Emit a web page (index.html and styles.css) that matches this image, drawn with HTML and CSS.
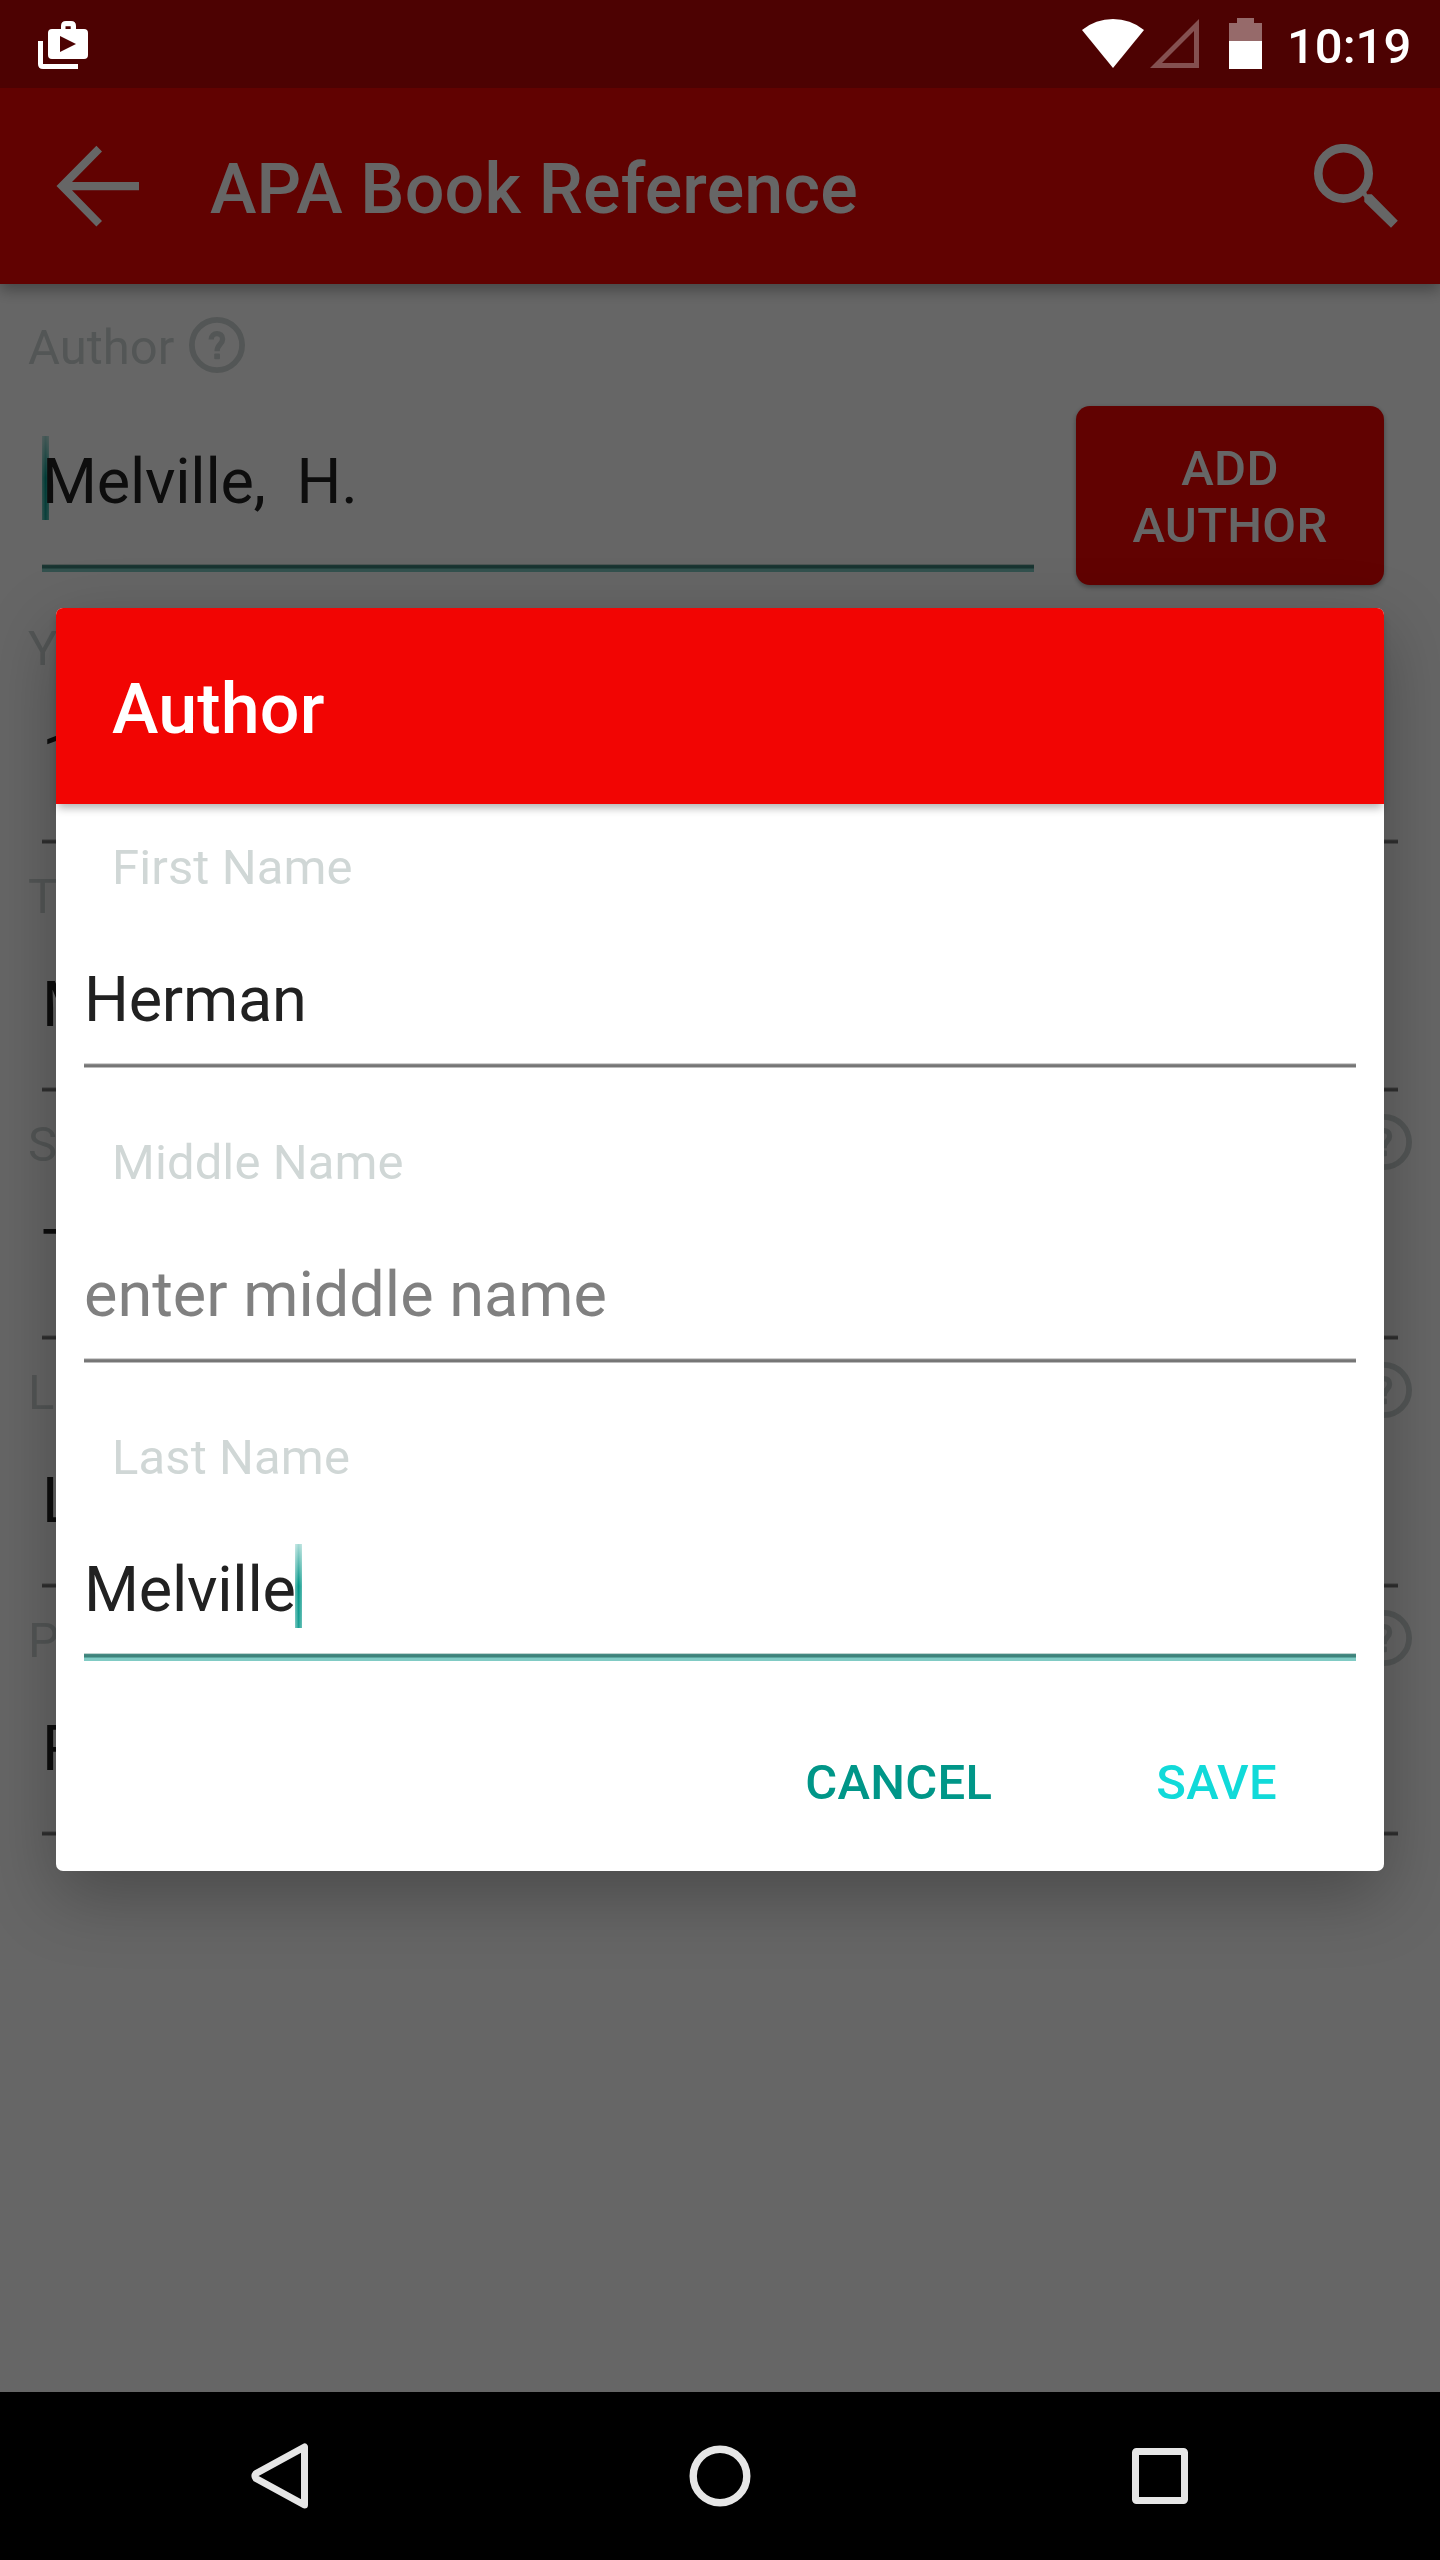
FILE: index.html
```html
<!DOCTYPE html>
<html lang="en">
<head>
<meta charset="utf-8">
<title>APA Book Reference</title>
<link rel="stylesheet" href="styles.css">
</head>
<body>
<svg width="0" height="0" class="defs">
  <symbol id="help" viewBox="0 0 56 56">
    <circle cx="28" cy="28" r="25.1" fill="none" stroke="currentColor" stroke-width="5.8"/>
    <path d="M22.2 22.6C22.2 14.7 33.6 14.9 33.6 21.9C33.6 27.3 28.1 27.4 28.1 34.2" fill="none" stroke="currentColor" stroke-width="5.4"/>
    <rect x="25.2" y="36.6" width="5.8" height="5.6" rx="1" fill="currentColor"/>
  </symbol>
</svg>
<div class="screen">
  <header class="status-bar">
    <svg class="notif" width="50" height="48" viewBox="38 21 50 48" fill="#fff">
      <path fill-rule="evenodd" d="M61 29V26Q61 21 66 21H71Q76 21 76 26V29H84Q88 29 88 33V55Q88 59 84 59H52Q48 59 48 55V33Q48 29 52 29ZM65.5 29H70.7V26.2H65.5ZM60 36V52L76 44Z"/>
      <path d="M38 41H43V64H78V69H43Q38 69 38 64Z"/>
    </svg>
    <div class="indicators">
      <svg width="62" height="49" viewBox="1082 19 62 49"><path fill="#fff" d="M1082 30A49.2 49.2 0 0 1 1144 30L1113 68Z"/></svg>
      <svg class="signal" width="49" height="49" viewBox="1150 19 49 49"><path fill="#fff" fill-opacity=".31" fill-rule="evenodd" d="M1199 19V68H1150ZM1194 31V63H1162Z"/></svg>
      <svg class="battery" width="33" height="51" viewBox="0 0 33 51"><path fill="#fff" fill-opacity=".41" d="M8 0H25V5H33V23H0V5H8Z"/><path fill="#fff" d="M0 23H33V51H0Z"/></svg>
      <span class="clock">10:19</span>
    </div>
  </header>
  <div class="toolbar">
    <svg class="back" width="84" height="84" viewBox="57 144 84 84"><path fill="#fff" d="M57.5 186L97.4 145.8L103 151.4L73 182H140V190.2H73L103 221L97.4 226.6Z"/></svg>
    <h1 class="title">APA Book Reference</h1>
    <svg class="search" width="84" height="84" viewBox="1314 144 84 84"><circle cx="1343.5" cy="173.4" r="25.2" fill="none" stroke="#fff" stroke-width="8.6"/><path fill="#fff" d="M1361 193L1365.5 189.5L1367 194.3H1371.7L1397.8 220.7L1391 227.8L1364.3 201.7V197.5Z"/></svg>
  </div>
  <main class="form">
    <div class="label-row">Author <svg class="help"><use href="#help"/></svg></div>
    <div class="author-row">
      <div class="author-field">
        <div class="value"><span class="caret start"></span>Melville,&nbsp; H.</div>
        <div class="line focus"></div>
      </div>
      <button class="add">ADD<br>AUTHOR</button>
    </div>
    <div class="row"><div class="label-row split">Y</div><div class="value">1</div><div class="line"></div></div>
    <div class="row"><div class="label-row split">T</div><div class="value">M</div><div class="line"></div></div>
    <div class="row"><div class="label-row split">S <svg class="help"><use href="#help"/></svg></div><div class="value">T</div><div class="line"></div></div>
    <div class="row"><div class="label-row split">L <svg class="help"><use href="#help"/></svg></div><div class="value">L</div><div class="line"></div></div>
    <div class="row"><div class="label-row split">P <svg class="help"><use href="#help"/></svg></div><div class="value">R</div><div class="line"></div></div>
  </main>
  <nav class="nav-bar">
    <svg width="240" height="168" viewBox="160 0 240 168"><path fill="none" stroke="#e6e6e6" stroke-width="7" stroke-linejoin="round" d="M304.500 55V113L256 86.5Q254 84 256 81.500Z"/></svg>
    <svg width="240" height="168" viewBox="600 0 240 168"><circle cx="720" cy="84" r="26.800" fill="none" stroke="#e6e6e6" stroke-width="7.400"/></svg>
    <svg width="240" height="168" viewBox="1040 0 240 168"><rect x="1135.500" y="59.500" width="49" height="49" rx="1" fill="none" stroke="#e6e6e6" stroke-width="7"/></svg>
  </nav>
  <div class="scrim">
    <section class="dialog">
      <h2 class="title dialog-title">Author</h2>
      <div class="dialog-body">
        <div class="field"><div class="field-label">First Name</div><div class="value">Herman</div><div class="line"></div></div>
        <div class="field"><div class="field-label">Middle Name</div><div class="value hint">enter middle name</div><div class="line"></div></div>
        <div class="field"><div class="field-label">Last Name</div><div class="value">Melville<span class="caret"></span></div><div class="line focus"></div></div>
        <div class="actions"><button class="cancel">CANCEL</button><button class="save">SAVE</button></div>
      </div>
    </section>
  </div>
</div>
</body>
</html>
```
FILE: styles.css
```css
* { box-sizing: border-box; }
body { margin: 0; font-family: Roboto, "Noto Sans", sans-serif; background: #000; }
.defs { position: absolute; }
svg { display: block; flex: none; }
button { border: 0; margin: 0; padding: 0; font: 500 49px/57px Roboto, sans-serif; letter-spacing: .3px; background: none; }
.screen { position: relative; width: 1440px; height: 2560px; display: flex; flex-direction: column; background: #fff; overflow: hidden; }

.status-bar { height: 88px; display: flex; justify-content: space-between; align-items: flex-start; padding: 0 26px 0 38px; background: #4d0202; position: relative; z-index: 3; }
.notif { margin-top: 21px; }
.indicators { display: flex; align-items: flex-start; padding-top: 19px; }
.signal { margin-left: 6px; }
.battery { margin: -1px 25px 0 30px; }
.clock { color: #fff; font-weight: 500; font-size: 49px; line-height: 55px; width: 127px; white-space: nowrap; }

.toolbar { height: 196px; flex: none; display: flex; align-items: flex-start; padding: 0 42px 0 56px; background: #f20503; box-shadow: 0 6px 14px rgba(0,0,0,.32); position: relative; z-index: 1; }
.back, .search { margin-top: 56px; }
.title { margin: 0; padding-top: 6px; font-size: 70px; line-height: 190px; font-weight: 500; letter-spacing: .17px; color: #fff; white-space: nowrap; }
.toolbar .title { flex: 1; padding-left: 70px; }

.form { flex: 1; padding-top: 33px; }
.label-row { display: flex; height: 60px; padding: 0 28px; gap: 15px; font-size: 49px; line-height: 62px; color: #d0d7d6; }
.split { justify-content: space-between; }
.help { width: 56px; height: 56px; }
.value { font-size: 63px; line-height: 75px; height: 75px; letter-spacing: -.25px; color: #212121; white-space: nowrap; position: relative; }
.hint { color: #808080; letter-spacing: 0; }
.line { height: 5px; background: linear-gradient(#d0d0d0 0 1px, #888 1px 2px, #767676 2px 4px, #bcbcbc 4px); }
.line.focus { height: 8px; background: linear-gradient(#c0d4d0 0 1px, #468a83 1px 2px, #3f837b 2px 4px, #5aa79f 4px 5px, #80cbc4 5px); }
.caret { display: inline-block; width: 7px; height: 84px; margin-left: -1px; vertical-align: top; position: relative; top: -8px; background: linear-gradient(rgba(255,255,255,.65), rgba(255,255,255,0) 50%, rgba(255,255,255,.12)), linear-gradient(90deg, #6cc2ba, #009688 50%, #55b8ae); }
.caret.start { position: absolute; left: 0; top: -8px; margin: 0; z-index: -1; }

.author-row { display: flex; height: 241px; padding: 0 56px 0 42px; gap: 42px; position: relative; z-index: 0; }
.author-field { flex: 1; padding-top: 67px; }
.author-field .line { margin-top: 45px; }
.add { width: 308px; height: 179px; margin-top: 29px; padding-top: 2px; border-radius: 14px; background: #f20503; color: #fff; box-shadow: 0 2px 5px rgba(0,0,0,.35); }
.row { height: 248px; }
.row .value { margin: 41px 42px 0; }
.row .line { margin: 45px 42px 0; }

.nav-bar { height: 168px; flex: none; background: #000; display: flex; justify-content: space-between; padding: 0 160px; }

.scrim { position: absolute; inset: 0 0 168px; z-index: 2; background: rgba(0,0,0,.6); padding: 608px 56px 0; }
.dialog { height: 1263px; border-radius: 7px; background: #fff; box-shadow: 0 24px 70px rgba(0,0,0,.28); }
.dialog-title { height: 196px; padding-left: 56px; border-radius: 7px 7px 0 0; background: #f20503; box-shadow: 0 6px 9px -2px rgba(0,0,0,.3); }
.dialog-body { padding: 33px 28px 0; }
.field { height: 295px; }
.field-label { height: 60px; padding-left: 28px; font-size: 49px; line-height: 62px; letter-spacing: .1px; color: #d0d7d6; }
.field .value { margin-top: 65px; }
.field .line { margin-top: 26px; }
.actions { display: flex; justify-content: flex-end; gap: 164px; padding: 18px 79px 0 0; }
.actions button { line-height: 86px; height: 86px; }
.cancel { color: #009688; }
.save { color: #11dad9; }
```
